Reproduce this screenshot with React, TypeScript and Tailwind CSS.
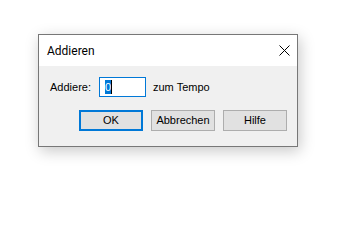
export default function App() {
  const buttons = [
    { label: 'OK', primary: true },
    { label: 'Abbrechen', primary: false },
    { label: 'Hilfe', primary: false },
  ];

  return (
    <div className="w-[358px] h-[201px] bg-white pl-[38px] pt-[34px] font-['Liberation_Sans',Arial,sans-serif]">
      <div className="w-[260px] h-[113px] flex flex-col border border-[#777777] bg-[#f0f0f0] shadow-[2px_4px_14px_rgba(0,0,0,0.22)]">
        {/* title bar */}
        <div className="h-[31px] bg-white flex items-center justify-between pl-[8px] pr-[7px]">
          <span className="text-[12px] text-black font-['Roboto','Liberation_Sans',sans-serif]">Addieren</span>
          <svg width="11" height="11" viewBox="0 0 11 11" className="text-black">
            <path d="M0.5 0.5 L10.5 10.5 M10.5 0.5 L0.5 10.5" stroke="currentColor" strokeWidth="1" fill="none" />
          </svg>
        </div>

        {/* body */}
        <div className="flex items-center pl-[11px] mt-[11px] text-[11px] text-black">
          <span className="w-[49px]">Addiere:</span>
          <div className="w-[47px] h-[20px] bg-white border border-[#0078d7] flex items-center pl-[5px]">
            <span className="bg-[#0078d7] text-white h-[14px] w-[6px] leading-[14px] flex justify-center">0</span>
            <span className="w-px h-[14px] bg-black" />
          </div>
          <span className="ml-[7px]">zum Tempo</span>
        </div>

        <div className="flex justify-end gap-[8px] pr-[10px] mt-[13px]">
          {buttons.map((b) => (
            <button
              key={b.label}
              className={
                b.primary
                  ? 'w-[64px] h-[21px] bg-[#e1e1e1] border-2 border-[#0078d7] text-[11px] text-black flex items-center justify-center'
                  : 'w-[64px] h-[21px] bg-[#e1e1e1] border border-[#adadad] text-[11px] text-black flex items-center justify-center'
              }
            >
              {b.label}
            </button>
          ))}
        </div>
      </div>
    </div>
  );
}
